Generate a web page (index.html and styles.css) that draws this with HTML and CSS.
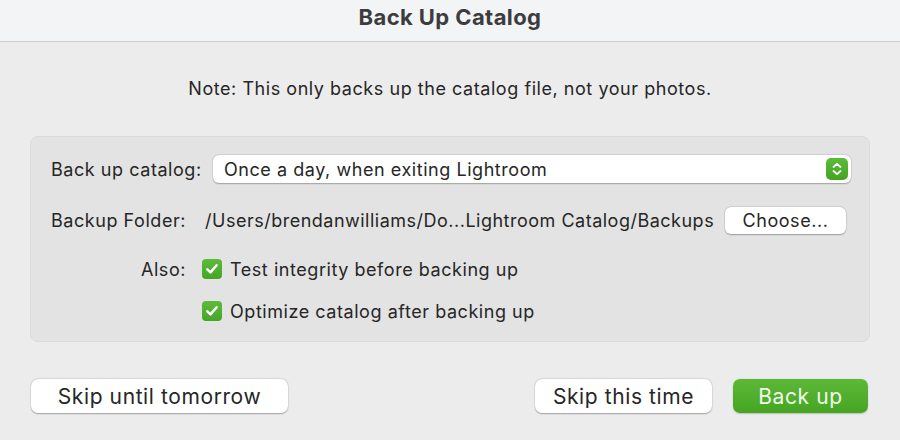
FILE: index.html
```html
<!DOCTYPE html>
<html>
<head>
<meta charset="utf-8">
<link rel="stylesheet" href="styles.css">
</head>
<body>
<div class="window">
  <header class="titlebar">Back Up Catalog</header>
  <p class="note">Note: This only backs up the catalog file, not your photos.</p>
  <section class="panel">
    <div class="row row-select">
      <span class="label label-catalog">Back up catalog:</span>
      <div class="select">
        <span class="select-text">Once a day, when exiting Lightroom</span>
        <span class="stepper">
          <svg width="22" height="22" viewBox="0 0 22 22"><path d="M7.5 9 L11 5.8 L14.5 9" fill="none" stroke="#fff" stroke-width="1.8" stroke-linecap="round" stroke-linejoin="round"/><path d="M7.5 13 L11 16.2 L14.5 13" fill="none" stroke="#fff" stroke-width="1.8" stroke-linecap="round" stroke-linejoin="round"/></svg>
        </span>
      </div>
    </div>
    <div class="row row-folder">
      <span class="label label-folder">Backup Folder:</span>
      <span class="path">/Users/brendanwilliams/Do...Lightroom Catalog/Backups</span>
      <button class="btn btn-choose">Choose...</button>
    </div>
    <div class="row row-check">
      <span class="label label-also">Also:</span>
      <span class="checkbox"><svg width="20" height="20" viewBox="0 0 20 20"><path d="M5.3 10.3 L8.5 13.4 L14.6 6.2" fill="none" stroke="#fff" stroke-width="2.5" stroke-linecap="round" stroke-linejoin="round"/></svg></span>
      <span class="check-text">Test integrity before backing up</span>
    </div>
    <div class="row row-check row-indent">
      <span class="checkbox"><svg width="20" height="20" viewBox="0 0 20 20"><path d="M5.3 10.3 L8.5 13.4 L14.6 6.2" fill="none" stroke="#fff" stroke-width="2.5" stroke-linecap="round" stroke-linejoin="round"/></svg></span>
      <span class="check-text">Optimize catalog after backing up</span>
    </div>
  </section>
  <footer class="actions">
    <button class="btn btn-large btn-skip-tomorrow">Skip until tomorrow</button>
    <div class="actions-right">
      <button class="btn btn-large btn-skip">Skip this time</button>
      <button class="btn btn-large btn-primary">Back up</button>
    </div>
  </footer>
</div>
</body>
</html>
```
FILE: styles.css
```css
* { box-sizing: border-box; }
html, body {
  margin: 0;
  padding: 0;
  width: 900px;
  height: 440px;
  overflow: hidden;
  background: #ececec;
  font-family: "Inter", "Liberation Sans", sans-serif;
  color: #262626;
}
.window {
  width: 900px;
  height: 440px;
  background: #ececec;
}
.titlebar {
  height: 42px;
  background: #f3f4f6;
  border-bottom: 1px solid #cdcdcf;
  text-align: center;
  font-weight: 700;
  font-size: 22px;
  letter-spacing: 0.4px;
  line-height: 35px;
  color: #3c3c3f;
}
.note {
  margin: 36px 0 0;
  height: 22px;
  line-height: 22px;
  text-align: center;
  font-size: 18px;
  letter-spacing: 0.55px;
  color: #262626;
}
.panel {
  margin: 36px 30px 0 30px;
  height: 206px;
  background: #e3e3e3;
  border: 1px solid #dadada;
  border-radius: 8px;
  padding: 18px 18px 0 20px;
}
.row {
  display: flex;
  align-items: center;
  font-size: 18px;
  letter-spacing: 0.55px;
}
.label { flex: none; }
.label-catalog { width: 162px; }
.label-folder { width: 154px; }
.label-also { width: 135px; text-align: right; margin-right: 16px; }
.row-select { height: 28px; }
.select {
  flex: 1;
  height: 28px;
  background: #fff;
  border-radius: 6px;
  box-shadow: 0 0.5px 1.5px rgba(0,0,0,0.28), 0 0 0 0.5px rgba(0,0,0,0.06);
  display: flex;
  align-items: center;
  justify-content: space-between;
  padding: 0 3px 0 11px;
}
.stepper {
  width: 22px;
  height: 22px;
  border-radius: 5px;
  background: linear-gradient(#5bbb3a, #44a322);
  display: flex;
}
.row-folder { margin-top: 24px; height: 27px; }
.path { flex: none; width: 520px; white-space: nowrap; letter-spacing: 0.5px; }
.btn {
  font-family: inherit;
  border: none;
  background: #fff;
  color: #262626;
  border-radius: 6px;
  box-shadow: 0 0.5px 1.5px rgba(0,0,0,0.3), 0 0 0 0.5px rgba(0,0,0,0.06);
  padding: 0;
}
.btn-choose {
  width: 121px;
  height: 27px;
  font-size: 18px;
  letter-spacing: 0.55px;
}
.row-check { height: 22px; margin-top: 24px; }
.row-indent { margin-top: 20px; padding-left: 151px; }
.checkbox {
  flex: none;
  width: 20px;
  height: 20px;
  border-radius: 4px;
  background: linear-gradient(#5cbb3b, #45a524);
  display: flex;
  margin-right: 8px;
}
.actions {
  margin-top: 37px;
  padding: 0 32px 0 31px;
  display: flex;
  justify-content: space-between;
}
.actions-right { display: flex; gap: 21px; }
.btn-large {
  height: 34px;
  font-size: 21px;
  letter-spacing: 0.6px;
  border-radius: 7px;
}
.btn-skip-tomorrow { width: 257px; }
.btn-skip { width: 177px; }
.btn-primary {
  width: 135px;
  background: linear-gradient(#5cb938, #45a521);
  color: #f2faee;
  box-shadow: 0 0.5px 1.5px rgba(0,0,0,0.2);
}
```
